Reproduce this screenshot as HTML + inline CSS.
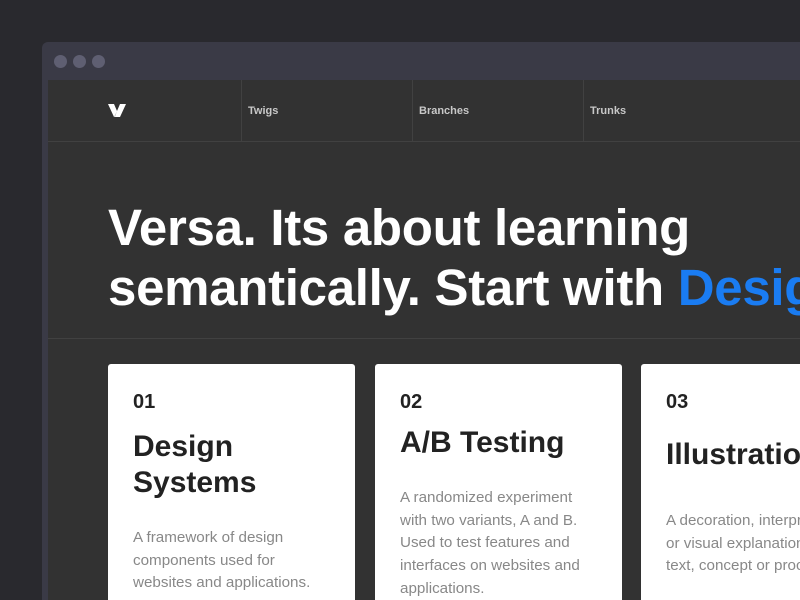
<!DOCTYPE html>
<html><head><style>
*{margin:0;padding:0;box-sizing:border-box}
html,body{width:800px;height:600px;overflow:hidden}
body{background:#29292e;font-family:"Liberation Sans",Arial,sans-serif;position:relative}
.win{position:absolute;left:42px;top:42px;width:758px;height:558px;background:#3a3a46;border-radius:6px 0 0 0;overflow:hidden}
.dot{position:absolute;top:13px;width:13px;height:13px;border-radius:50%;background:#5f5f72}
.content{position:absolute;left:48px;top:80px;width:752px;height:520px;background:#323232;overflow:hidden}
.nav{position:absolute;left:0;top:0;width:752px;height:62px;border-bottom:1px solid #414141}
.nav .c{position:absolute;top:0;height:61px;border-left:1px solid #414141;color:#c8c8c8;font-size:11px;font-weight:bold;padding:25px 0 0 6px}
.stage{position:absolute;left:0;top:0;width:800px;height:600px;overflow:hidden}
h1{position:absolute;left:108px;top:198px;color:#fff;font-size:51px;line-height:60px;font-weight:bold;white-space:nowrap;letter-spacing:-0.3px}
h1 span{color:#1a7cf2}
.sep{position:absolute;left:48px;top:338px;width:752px;height:1px;background:#414141}
.card{position:absolute;top:364px;height:236px;background:#fff;border-radius:3px 3px 0 0;overflow:hidden}
.card .n{position:absolute;left:25px;top:27px;font-size:20px;font-weight:bold;color:#222}
.card .t{position:absolute;left:25px;font-size:30px;font-weight:bold;color:#222;line-height:36px;white-space:nowrap}
.card .d{position:absolute;left:25px;font-size:15.2px;color:#888;line-height:22.7px;white-space:nowrap}
</style></head><body>
<div class="win">
<div class="dot" style="left:12px"></div><div class="dot" style="left:31px"></div><div class="dot" style="left:50px"></div>
</div>
<div class="content">
<div class="nav">
<svg style="position:absolute;left:60px;top:24px" width="18" height="13" viewBox="0 0 18 13"><path d="M0 0h6l3 7 3-7h6l-6 13h-6z" fill="#fff"/><path d="M9 7l-2 6h-1z" fill="#bbb"/></svg>
<div class="c" style="left:193px;width:171px">Twigs</div>
<div class="c" style="left:364px;width:171px">Branches</div>
<div class="c" style="left:535px;width:217px">Trunks</div>
</div>
</div>
<div class="stage">
<h1>Versa. Its about learning<br>semantically. Start with <span>Design</span></h1>
<div class="sep"></div>
<div class="card" style="left:108px;width:247px"><div class="n">01</div><div class="t" style="top:65px">Design<br>Systems</div><div class="d" style="top:163px">A framework of design<br>components used for<br>websites and applications.</div></div>
<div class="card" style="left:375px;width:247px"><div class="n">02</div><div class="t" style="top:61px">A/B Testing</div><div class="d" style="top:123px">A randomized experiment<br>with two variants, A and B.<br>Used to test features and<br>interfaces on websites and<br>applications.</div></div>
<div class="card" style="left:641px;width:159px;border-radius:3px 0 0 0"><div class="n">03</div><div class="t" style="top:73px">Illustration</div><div class="d" style="top:146px">A decoration, interpretation<br>or visual explanation of a<br>text, concept or process</div></div>
</div>
</body></html>
